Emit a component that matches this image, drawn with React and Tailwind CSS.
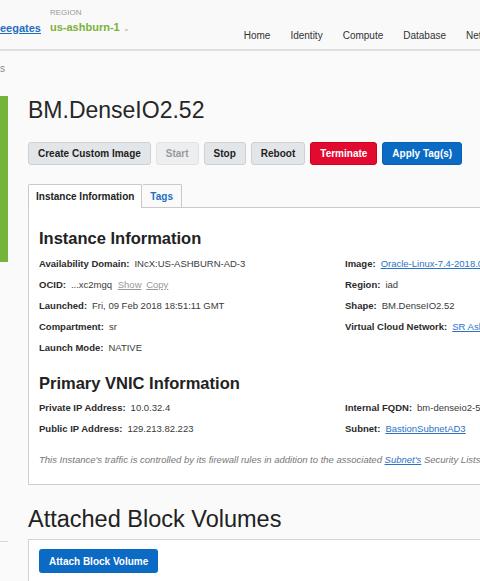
import React from 'react';

const navItems = ['Home', 'Identity', 'Compute', 'Database', 'Networking'];
const actions = [
  { label: 'Create Custom Image', cls: 'bg-[#e3e6e8] border-[#cdd1d4] text-[#222]' },
  { label: 'Start', cls: 'bg-[#eceeef] border-[#e0e2e4] text-[#9a9a9a]' },
  { label: 'Stop', cls: 'bg-[#e3e6e8] border-[#cdd1d4] text-[#222]' },
  { label: 'Reboot', cls: 'bg-[#e3e6e8] border-[#cdd1d4] text-[#222]' },
  { label: 'Terminate', cls: 'bg-[#e20a2e] border-[#d0021b] text-white' },
  { label: 'Apply Tag(s)', cls: 'bg-[#0b6ac4] border-[#0a5fb0] text-white' },
];

function Field({ label, children }) {
  return (
    <div className="flex items-baseline gap-[5px] h-[21px] whitespace-nowrap">
      <span className="font-bold text-[#2b2b2b]">{label}:</span>
      <span className="text-[#3a3a3a]">{children}</span>
    </div>
  );
}

function Link({ children }) {
  return <span className="text-[#2a73c6] underline">{children}</span>;
}

export default function App() {
  return (
    <div className="w-[480px] h-[581px] overflow-hidden bg-[#fafafa] text-[10px] text-[#333]" style={{ fontFamily: '"Liberation Sans", Arial, sans-serif' }}>
      <div className="w-[620px]">
        {/* header */}
        <div className="h-[51px] flex border-b-2 border-[#dedede] bg-[#f9f9f9]">
          <div className="pt-[20px] text-[11px] font-bold text-[#1f6fc0] underline">eegates</div>
          <div className="ml-[9px] pt-[8px]">
            <div className="text-[8px] text-[#9a9a9a] leading-[10px]">REGION</div>
            <div className="text-[11px] font-bold text-[#79b237] leading-[14px] mt-[2px]">
              us-ashburn-1 <span className="text-[8px] font-normal text-[#aaa]">⌄</span>
            </div>
          </div>
          <div className="ml-[114px] flex gap-[20px] pt-[28px] text-[10px] text-[#333]">
            {navItems.map((n) => (
              <span key={n}>{n}</span>
            ))}
          </div>
        </div>

        {/* breadcrumb */}
        <div className="h-[32px] pt-[10px] text-[10px] text-[#888]">s</div>

        <div className="flex">
          {/* sidebar */}
          <div className="w-[8px] shrink-0">
            <div className="mt-[13px] h-[166px] bg-[#74b43a]" />
            <div className="mt-[279px] border-t border-[#d8d8d8]" />
          </div>

          {/* content */}
          <div className="ml-[20px] flex-1">
            <h1 className="text-[23px] leading-[30px] text-[#262626] mt-[12px]">BM.DenseIO2.52</h1>

            <div className="flex gap-[5px] mt-[17px]">
              {actions.map((a) => (
                <button key={a.label} className={`h-[23px] px-[9px] rounded-[3px] border font-bold text-[10px] ${a.cls}`}>
                  {a.label}
                </button>
              ))}
            </div>

            {/* tabs */}
            <div className="flex mt-[19px] border-b border-[#c9c9c9]">
              <div className="h-[24px] px-[7px] flex items-center border border-b-0 border-[#c9c9c9] bg-white font-bold text-[#222] -mb-px rounded-t-[2px]">
                Instance Information
              </div>
              <div className="h-[23px] px-[8px] flex items-center border border-l-0 border-b-0 border-[#c9c9c9] font-bold text-[#1f6fc0] rounded-t-[2px]">
                Tags
              </div>
            </div>

            <div className="border border-t-0 border-[#cfcfcf] bg-white pl-[10px] pt-[19px] pb-[17px] text-[9.5px]">
              <h2 className="text-[16.5px] font-bold text-[#222] leading-[22px]">Instance Information</h2>
              <div className="flex mt-[8px]">
                <div className="w-[306px]">
                  <Field label="Availability Domain">INcX:US-ASHBURN-AD-3</Field>
                  <Field label="OCID">
                    ...xc2mgq <span className="ml-[3px] text-[#999] underline">Show</span>{' '}
                    <span className="ml-[2px] text-[#999] underline">Copy</span>
                  </Field>
                  <Field label="Launched">Fri, 09 Feb 2018 18:51:11 GMT</Field>
                  <Field label="Compartment">sr</Field>
                  <Field label="Launch Mode">NATIVE</Field>
                </div>
                <div>
                  <Field label="Image"><Link>Oracle-Linux-7.4-2018.01.20-0</Link></Field>
                  <Field label="Region">iad</Field>
                  <Field label="Shape">BM.DenseIO2.52</Field>
                  <Field label="Virtual Cloud Network"><Link>SR Ashburn VCN</Link></Field>
                </div>
              </div>

              <h2 className="text-[16.5px] font-bold text-[#222] leading-[22px] mt-[10px]">Primary VNIC Information</h2>
              <div className="flex mt-[7px]">
                <div className="w-[306px]">
                  <Field label="Private IP Address">10.0.32.4</Field>
                  <Field label="Public IP Address">129.213.82.223</Field>
                </div>
                <div>
                  <Field label="Internal FQDN">bm-denseio2-52.bastionsubnetad3</Field>
                  <Field label="Subnet"><Link>BastionSubnetAD3</Link></Field>
                </div>
              </div>
              <p className="mt-[10px] italic text-[#777] whitespace-nowrap">
                This Instance's traffic is controlled by its firewall rules in addition to the associated <Link>Subnet's</Link> Security Lists.
              </p>
            </div>

            <h2 className="text-[23.5px] leading-[28px] text-[#222] mt-[20px]">Attached Block Volumes</h2>
            <div className="mt-[6px] border border-[#d4d4d4] bg-white pl-[10px] pt-[9px] h-[60px]">
              <button className="h-[24px] px-[10px] rounded-[3px] bg-[#0b6ac4] text-white font-bold text-[10px]">
                Attach Block Volume
              </button>
            </div>
          </div>
        </div>
      </div>
    </div>
  );
}
